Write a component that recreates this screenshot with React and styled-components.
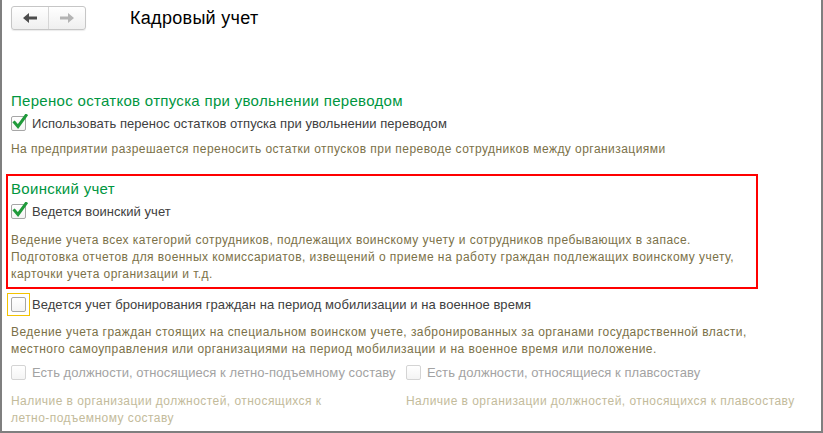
import React from 'react';
import styled, { createGlobalStyle } from 'styled-components';

const GlobalStyle = createGlobalStyle`
	html, body {
		margin: 0;
		padding: 0;
		background: #fff;
	}
	body {
		font-family: "Liberation Sans", Arial, sans-serif;
	}
`;

const Arrow = ({ dir, color }) => (
	<svg width="14" height="10" viewBox="0 0 14 10">
		{dir === 'left' ? (
			<path d="M0 5 L6 0 L6 3.5 L14 3.5 L14 6.5 L6 6.5 L6 10 Z" fill={color} />
		) : (
			<path d="M14 5 L8 0 L8 3.5 L0 3.5 L0 6.5 L8 6.5 L8 10 Z" fill={color} />
		)}
	</svg>
);

const CheckMark = () => (
	<svg width="16" height="16" viewBox="0 0 16 16">
		<path d="M2.5 8.5 L6 12.5 L14 1.5" fill="none" stroke="#1f9a3a" strokeWidth="3" strokeLinecap="square" />
	</svg>
);

const App = () => {
	return (
		<Window>
			<GlobalStyle />
			<Header>
				<NavGroup>
					<NavButton><Arrow dir="left" color="#4d4d4d" /></NavButton>
					<NavButton $divided><Arrow dir="right" color="#b4b4b4" /></NavButton>
				</NavGroup>
				<PageTitle>Кадровый учет</PageTitle>
			</Header>

			<Section $top={56}>
				<GroupTitle>Перенос остатков отпуска при увольнении переводом</GroupTitle>
				<CheckRow>
					<Box><CheckMark /></Box>
					<Label>Использовать перенос остатков отпуска при увольнении переводом</Label>
				</CheckRow>
				<Hint $gap={9}>На предприятии разрешается переносить остатки отпусков при переводе сотрудников между организациями</Hint>
			</Section>

			<Section $top={10} $highlighted>
				<GroupTitle>Воинский учет</GroupTitle>
				<CheckRow>
					<Box><CheckMark /></Box>
					<Label>Ведется воинский учет</Label>
				</CheckRow>
				<Hint $gap={12}>
					Ведение учета всех категорий сотрудников, подлежащих воинскому учету и сотрудников пребывающих в запасе.<br />
					Подготовка отчетов для военных комиссариатов, извещений о приеме на работу граждан подлежащих воинскому учету,<br />
					карточки учета организации и т.д.
				</Hint>
			</Section>

			<Section $top={0}>
				<CheckRow $focused>
					<Focus><Box /></Focus>
					<Label>Ведется учет бронирования граждан на период мобилизации и на военное время</Label>
				</CheckRow>
				<Hint $gap={8}>
					Ведение учета граждан стоящих на специальном воинском учете, забронированных за органами государственной власти,<br />
					местного самоуправления или организациями на период мобилизации и на военное время или положение.
				</Hint>
				<Columns>
					<Column>
						<CheckRow>
							<Box $disabled />
							<Label $disabled>Есть должности, относящиеся к летно-подъемному составу</Label>
						</CheckRow>
						<Hint $gap={12} $disabled>
							Наличие в организации должностей, относящихся к<br />
							летно-подъемному составу
						</Hint>
					</Column>
					<Column>
						<CheckRow>
							<Box $disabled />
							<Label $disabled>Есть должности, относящиеся к плавсоставу</Label>
						</CheckRow>
						<Hint $gap={12} $disabled>Наличие в организации должностей, относящихся к плавсоставу</Hint>
					</Column>
				</Columns>
			</Section>
		</Window>
	);
};

export default App;

const Window = styled.div`
	width: 823px;
	height: 433px;
	box-sizing: border-box;
	border: 2px solid #7f7f7f;
	border-top: none;
	padding: 0 0 0 4px;
	overflow: hidden;
	background: #fff;
`;

const Header = styled.div`
	display: flex;
	align-items: center;
	padding: 6px 0 0 5px;
	height: 24px;
`;

const NavGroup = styled.div`
	display: flex;
	height: 24px;
	box-sizing: border-box;
	border: 1px solid #c6c6c6;
	border-radius: 3px;
	background: linear-gradient(#ffffff, #efefef);
	box-shadow: 0 1px 1px rgba(0, 0, 0, 0.08);
`;

const NavButton = styled.div`
	width: 36px;
	display: flex;
	align-items: center;
	justify-content: center;
	border-left: ${p => (p.$divided ? '1px solid #d6d6d6' : 'none')};
`;

const PageTitle = styled.h1`
	margin: 0 0 0 44px;
	font-size: 18px;
	font-weight: normal;
	color: #000;
	letter-spacing: 0.3px;
`;

const Section = styled.div`
	margin-top: ${p => p.$top}px;
	padding: 0 3px 4px;
	border: 2px solid ${p => (p.$highlighted ? '#ff0000' : 'transparent')};
	width: ${p => (p.$highlighted ? '742px' : 'auto')};
`;

const GroupTitle = styled.div`
	font-size: 15px;
	line-height: 18px;
	color: #00963f;
	letter-spacing: 0.3px;
	padding-top: 4px;
`;

const CheckRow = styled.div`
	display: flex;
	align-items: center;
	height: ${p => (p.$focused ? '24px' : '18px')};
	margin-top: ${p => (p.$focused ? '1px' : '4px')};
	margin-left: ${p => (p.$focused ? '-4px' : '0')};
`;

const Focus = styled.div`
	width: 23px;
	height: 23px;
	box-sizing: border-box;
	border: 1px solid #f3c300;
	display: flex;
	align-items: center;
	justify-content: center;
	margin-right: 2px;
`;

const Box = styled.div`
	position: relative;
	width: 15px;
	height: 15px;
	box-sizing: border-box;
	border: 1px solid ${p => (p.$disabled ? '#d4d4d4' : '#a6a6a6')};
	border-radius: 2px;
	background: linear-gradient(#ffffff, #f4f4f4);
	margin-right: 6px;
	flex-shrink: 0;

	${Focus} & {
		margin-right: 0;
	}

	& svg {
		position: absolute;
		left: 0;
		top: -3px;
	}
`;

const Label = styled.span`
	font-size: 13px;
	color: ${p => (p.$disabled ? '#a3a3a3' : '#404040')};
	letter-spacing: 0.05px;
	white-space: nowrap;
`;

const Hint = styled.div`
	margin-top: ${p => p.$gap}px;
	font-size: 12px;
	line-height: 17px;
	color: ${p => (p.$disabled ? '#c3bb9b' : '#7b7148')};
	letter-spacing: 0.45px;
	white-space: nowrap;
`;

const Columns = styled.div`
	display: grid;
	grid-template-columns: 395px 1fr;
	margin-top: 1px;
`;

const Column = styled.div`
	display: flex;
	flex-direction: column;
`;
